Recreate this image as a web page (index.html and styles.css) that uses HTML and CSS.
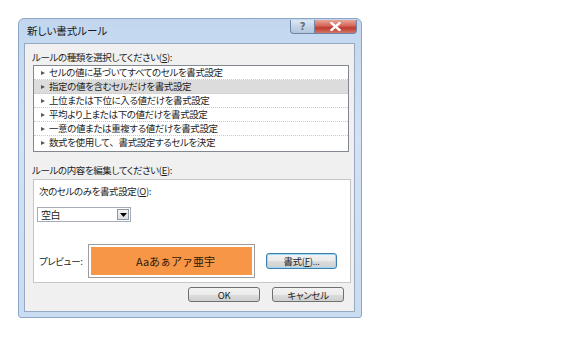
FILE: index.html
```html
<!DOCTYPE html>
<html lang="ja">
<head>
    <meta charset="UTF-8">
    <meta name="viewport" content="width=device-width, initial-scale=1.0">
    <title>新しい書式ルール</title>
    <link rel="stylesheet" href="styles.css">
</head>
<body>
    <div class="dialog"> <!-- Dialog window -->
        <div class="titlebar">
            <span class="title">新しい書式ルール</span>
            <div class="caption-buttons">
                <span class="btn-help">?</span>
                <span class="btn-close">
                    <svg width="11" height="9" viewBox="0 0 11 9"><path d="M1.5 1 L9.5 8 M9.5 1 L1.5 8" stroke="#fff" stroke-width="2.4" stroke-linecap="square"/></svg>
                </span>
            </div>
        </div>
        <div class="client">
            <div class="label">ルールの種類を選択してください(<u>S</u>):</div>
            <ul class="rule-list"> <!-- Rule types -->
                <li>セルの値に基づいてすべてのセルを書式設定</li>
                <li class="selected">指定の値を含むセルだけを書式設定</li>
                <li>上位または下位に入る値だけを書式設定</li>
                <li>平均より上または下の値だけを書式設定</li>
                <li>一意の値または重複する値だけを書式設定</li>
                <li>数式を使用して<span class="wide">、</span>書式設定するセルを決定</li>
            </ul>
            <div class="label label-edit">ルールの内容を編集してください(<u>E</u>):</div>
            <div class="panel"> <!-- Rule description -->
                <div class="label label-inner">次のセルのみを書式設定(<u>O</u>):</div>
                <div class="select">
                    <span class="select-text">空白</span>
                    <span class="select-arrow"><svg width="7" height="4" viewBox="0 0 7 4"><path d="M0 0 H7 L3.5 4 Z" fill="#000"/></svg></span>
                </div>
                <div class="preview-row">
                    <span class="preview-label">プレビュー:</span>
                    <div class="preview">
                        <div class="preview-sample">Aaあぁアァ亜宇</div>
                    </div>
                    <button class="btn btn-default">書式(<u>F</u>)...</button>
                </div>
            </div>
            <div class="actions">
                <button class="btn">OK</button>
                <button class="btn">キャンセル</button>
            </div>
        </div>
    </div>
</body>
</html>
```

FILE: styles.css
```css
* {
    margin: 0; /* reset */
    padding: 0;
    box-sizing: border-box;
}
body {
    font-family: "Noto Sans CJK JP", "Noto Sans", sans-serif;
    font-size: 9.5px;
    font-feature-settings: "palt"; /* proportional kana, like Meiryo UI */
    letter-spacing: -0.4px;
    color: #1e1e1e;
    background: #fff;
    padding: 18px 0 0 18px; /* dialog sits near the top left */
}
.dialog {
    width: 344px;
    height: 300px;
    border: 1px solid #8ca6c6;
    border-radius: 6px 6px 3px 3px;
    background: linear-gradient(180deg, #c2d7ef 0%, #d3e2f4 40%, #c9dcf1 100%);
    display: flex;
    flex-direction: column;
}
.titlebar {
    height: 24px;
    display: flex;
    justify-content: space-between;
    align-items: flex-start;
    padding: 0 4px 0 8px;
}
.title {
    font-size: 10.5px;
    line-height: 24px;
    letter-spacing: 0;
    color: #1a1a1a;
}
.caption-buttons {
    display: flex;
    margin-top: 1px;
}
.caption-buttons span {
    height: 14px;
    display: flex;
    align-items: center;
    justify-content: center;
    border: 1px solid #6d86a6;
    border-top: none;
}
.btn-help {
    width: 25px;
    border-radius: 0 0 0 4px;
    background: linear-gradient(180deg, #dde8f4 0%, #c4d4e6 50%, #b3c6dc 100%);
    color: #5f6b7a;
    font-weight: bold;
    font-size: 10px;
    font-family: "DejaVu Sans", sans-serif;
}
.btn-close {
    width: 42px;
    border-left: none !important;
    border-radius: 0 0 4px 0;
    background: linear-gradient(180deg, #e8a596 0%, #d6665a 45%, #bf3a2e 60%, #d27568 100%);
}
.client {
    flex: 1;
    margin: 0 6px 5px 5px;
    border: 1px solid #97a9c0;
    background: #f0f0f0;
    padding: 7px 6px 0 7px;
}
.label {
    line-height: 12px;
    white-space: nowrap;
}
.label u, .btn u {
    text-decoration: underline;
}
.rule-list {
    list-style: none;
    margin: 2px 0 0 1px;
    width: 316px;
    border: 1px solid #828790;
    background: #fff;
    padding-bottom: 1px;
}
.rule-list li {
    height: 14px;
    line-height: 13px;
    padding-left: 7px;
    border-bottom: 1px dotted #c8c8c8;
    white-space: nowrap;
}
.rule-list li:last-child {
    border-bottom: none;
}
.rule-list li::before {
    content: "";
    display: inline-block;
    border-left: 4px solid #555;
    border-top: 2.5px solid transparent;
    border-bottom: 2.5px solid transparent;
    margin-right: 4px;
    vertical-align: 1px;
}
.rule-list li.selected {
    background: #dcdcdc; /* highlighted row */
}
.wide {
    font-feature-settings: normal; /* full width comma */
}
.label-edit {
    margin-top: 12px;
}
.panel {
    margin: 3px 0 0 1px;
    width: 318px;
    height: 104px;
    border: 1px solid #c6c6c6;
    background: #fff;
    padding: 5px 3px 0 3px;
}
.label-inner {
    margin-left: 2px;
}
.select {
    margin-top: 10px;
    width: 94px;
    height: 15px;
    border: 1px solid #a5acb5;
    display: flex;
    align-items: center;
    justify-content: space-between;
    padding: 0 1px 0 3px;
}
.select-text {
    font-size: 10px;
    line-height: 13px;
}
.select-arrow {
    width: 12px;
    height: 11px;
    border: 1px solid #8e99a6;
    background: linear-gradient(180deg, #f4f4f4, #d9dde2);
    display: flex;
    align-items: center;
    justify-content: center;
}
.preview-row {
    margin-top: 22px;
    display: flex;
    align-items: center;
}
.preview-label {
    width: 51px;
    padding-left: 2px;
}
.preview {
    width: 167px;
    height: 34px;
    border: 1px solid #9c9c9c;
    padding: 2px;
    background: #fff;
}
.preview-sample {
    height: 100%;
    background: #f79646;
    display: flex;
    align-items: center;
    justify-content: center;
    font-size: 11px;
    letter-spacing: 0;
    color: #2b1a0a;
    padding-left: 8px;
    font-feature-settings: normal;
}
.btn {
    font-family: inherit;
    font-size: 9.5px;
    font-feature-settings: "palt";
    letter-spacing: -0.3px;
    color: #1e1e1e;
    height: 16px;
    border: 1px solid #707070;
    border-radius: 3px;
    background: linear-gradient(180deg, #f2f2f2 0%, #ebebeb 50%, #dddddd 51%, #cfcfcf 100%);
    cursor: pointer;
}
.btn-default {
    margin-left: 11px;
    width: 71px;
    border-color: #3c7fb1;
    box-shadow: inset 0 0 0 1px #9fd7f5;
}
.actions {
    display: flex;
    justify-content: flex-end;
    gap: 12px;
    margin-top: 4px;
    padding-right: 4px;
}
.actions .btn {
    width: 72px;
    height: 15px;
}
```
